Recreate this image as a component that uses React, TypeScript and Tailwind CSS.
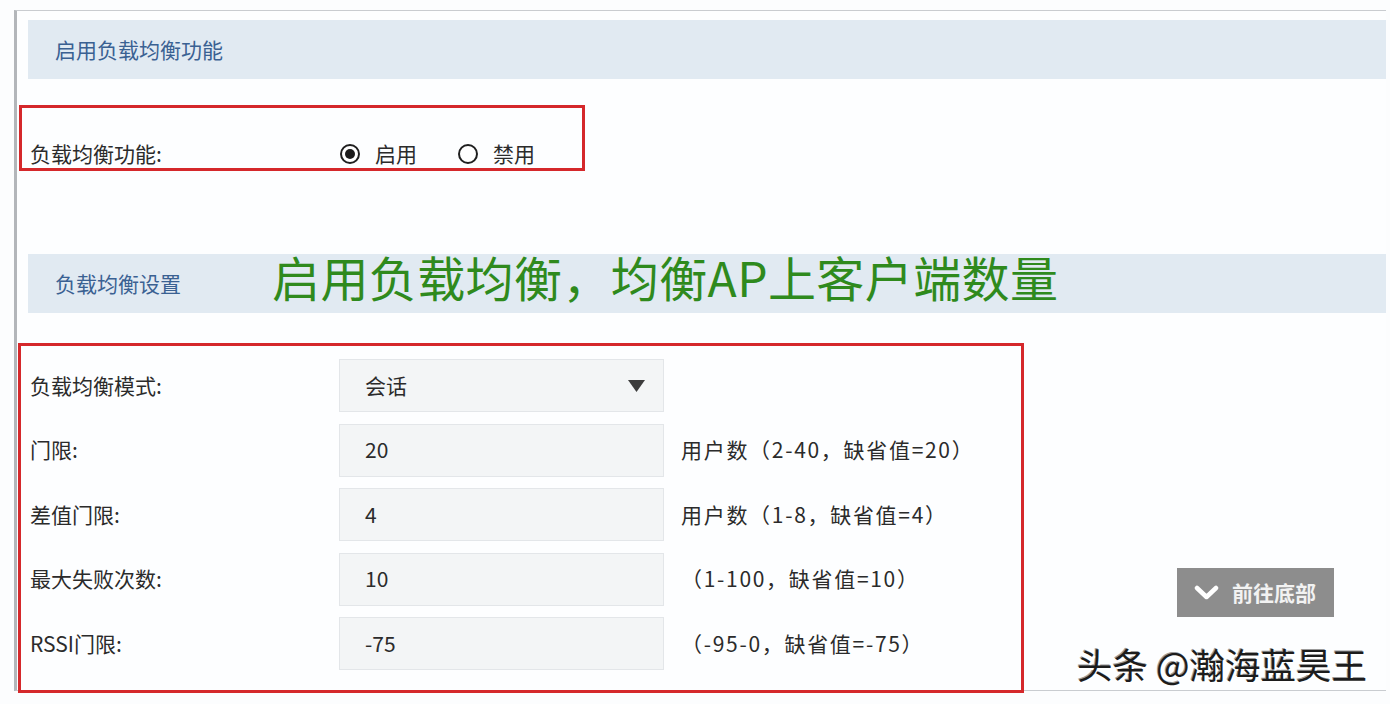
import React from "react";

const FONT = { fontFamily: '"Noto Sans CJK SC", "Noto Sans", "Liberation Sans", sans-serif' };

type Row = { label: string; value: string; hint?: string; select?: boolean };

const rows: Row[] = [
  { label: "负载均衡模式:", value: "会话", select: true },
  { label: "门限:", value: "20", hint: "用户数（2-40，缺省值=20）" },
  { label: "差值门限:", value: "4", hint: "用户数（1-8，缺省值=4）" },
  { label: "最大失败次数:", value: "10", hint: "（1-100，缺省值=10）" },
  { label: "RSSI门限:", value: "-75", hint: "（-95-0，缺省值=-75）" },
];

function Radio({ checked }: { checked?: boolean }) {
  return (
    <span className="flex h-[20px] w-[20px] items-center justify-center rounded-full border-2 border-[#1f1f1f] bg-white">
      {checked && <span className="h-[10px] w-[10px] rounded-full bg-[#1a1a1a]" />}
    </span>
  );
}

function SectionHeader({ title, children }: { title: string; children?: React.ReactNode }) {
  return (
    <div className="ml-[11px] flex h-[59px] items-center bg-[#e1eaf2] pl-[27px]">
      <span className="w-[217px] text-[21px] text-[#3a6192]">{title}</span>
      {children}
    </div>
  );
}

export default function App() {
  return (
    <div className="relative h-[704px] w-[1390px] overflow-hidden bg-[#fcfdfe] pt-[10px] pl-[14px]" style={FONT}>
      <div className="flex w-[1372px] flex-col border-t border-b border-l-[3px] border-t-[#c9ccd0] border-b-[#c9ccd0] border-l-[#b3b6ba] bg-[#fdfeff] pt-[9px]">
        <SectionHeader title="启用负载均衡功能" />

        {/* enable / disable toggle */}
        <div className="mt-[26px] ml-[2px] flex h-[66px] w-[566px] items-end border-[3px] border-[#d5282b] pl-[8px]">
          <div className="flex h-[28px] items-center">
            <span className="w-[310px] text-[21px] text-[#2b2b2b]">负载均衡功能:</span>
            <label className="flex items-center gap-[15px]">
              <Radio checked />
              <span className="text-[21px] text-[#2b2b2b]">启用</span>
            </label>
            <label className="ml-[41px] flex items-center gap-[15px]">
              <Radio />
              <span className="text-[21px] text-[#2b2b2b]">禁用</span>
            </label>
          </div>
        </div>

        <div className="mt-[83px]">
          <SectionHeader title="负载均衡设置">
            <span className="mb-[16px] text-[48px] leading-none tracking-[0.4px] text-[#2f8a1d]">
              启用负载均衡，均衡AP上客户端数量
            </span>
          </SectionHeader>
        </div>

        <div className="mt-[30px] -mb-[3px] flex items-start">
          {/* settings form */}
          <div className="ml-[1px] flex h-[350px] w-[1006px] flex-col gap-[11.5px] border-[3px] border-[#d5282b] pt-[13px] pl-[9px]">
            {rows.map((r) => (
              <div key={r.label} className="flex h-[53px] items-center">
                <span className="w-[309px] text-[21px] text-[#2b2b2b]">{r.label}</span>
                <div className="flex h-[53px] w-[325px] items-center justify-between border border-[#e3e6e9] bg-[#f3f5f6] pr-[18px] pl-[25px]">
                  <span className="text-[21px] text-[#2b2b2b]">{r.value}</span>
                  {r.select && (
                    <svg width="17" height="12" viewBox="0 0 17 12">
                      <path d="M0 0 H17 L8.5 12 Z" fill="#3c3c3c" />
                    </svg>
                  )}
                </div>
                {r.hint && (
                  <span className="ml-[17px] text-[21px] tracking-[1.7px] text-[#2b2b2b]">{r.hint}</span>
                )}
              </div>
            ))}
          </div>

          <button className="mt-[225px] ml-[153px] flex h-[49px] w-[157px] items-center gap-[13px] bg-[#8d8d8d] pl-[17px] text-[21px] font-bold text-[#f2f2f2]">
            <svg width="25" height="16" viewBox="0 0 25 16">
              <path d="M3 3 L12.5 12 L22 3" fill="none" stroke="#ffffff" strokeWidth="4.5" strokeLinecap="round" strokeLinejoin="round" />
            </svg>
            前往底部
          </button>
        </div>
      </div>

      {/* watermark */}
      <div className="absolute top-[640px] left-[1077px] text-[35.5px] leading-[48px] text-[#1c1c1c] [text-shadow:2px_2px_0_#ffffff,-1px_-1px_0_#9a9a9a]">
        头条 @瀚海蓝昊王
      </div>
    </div>
  );
}
